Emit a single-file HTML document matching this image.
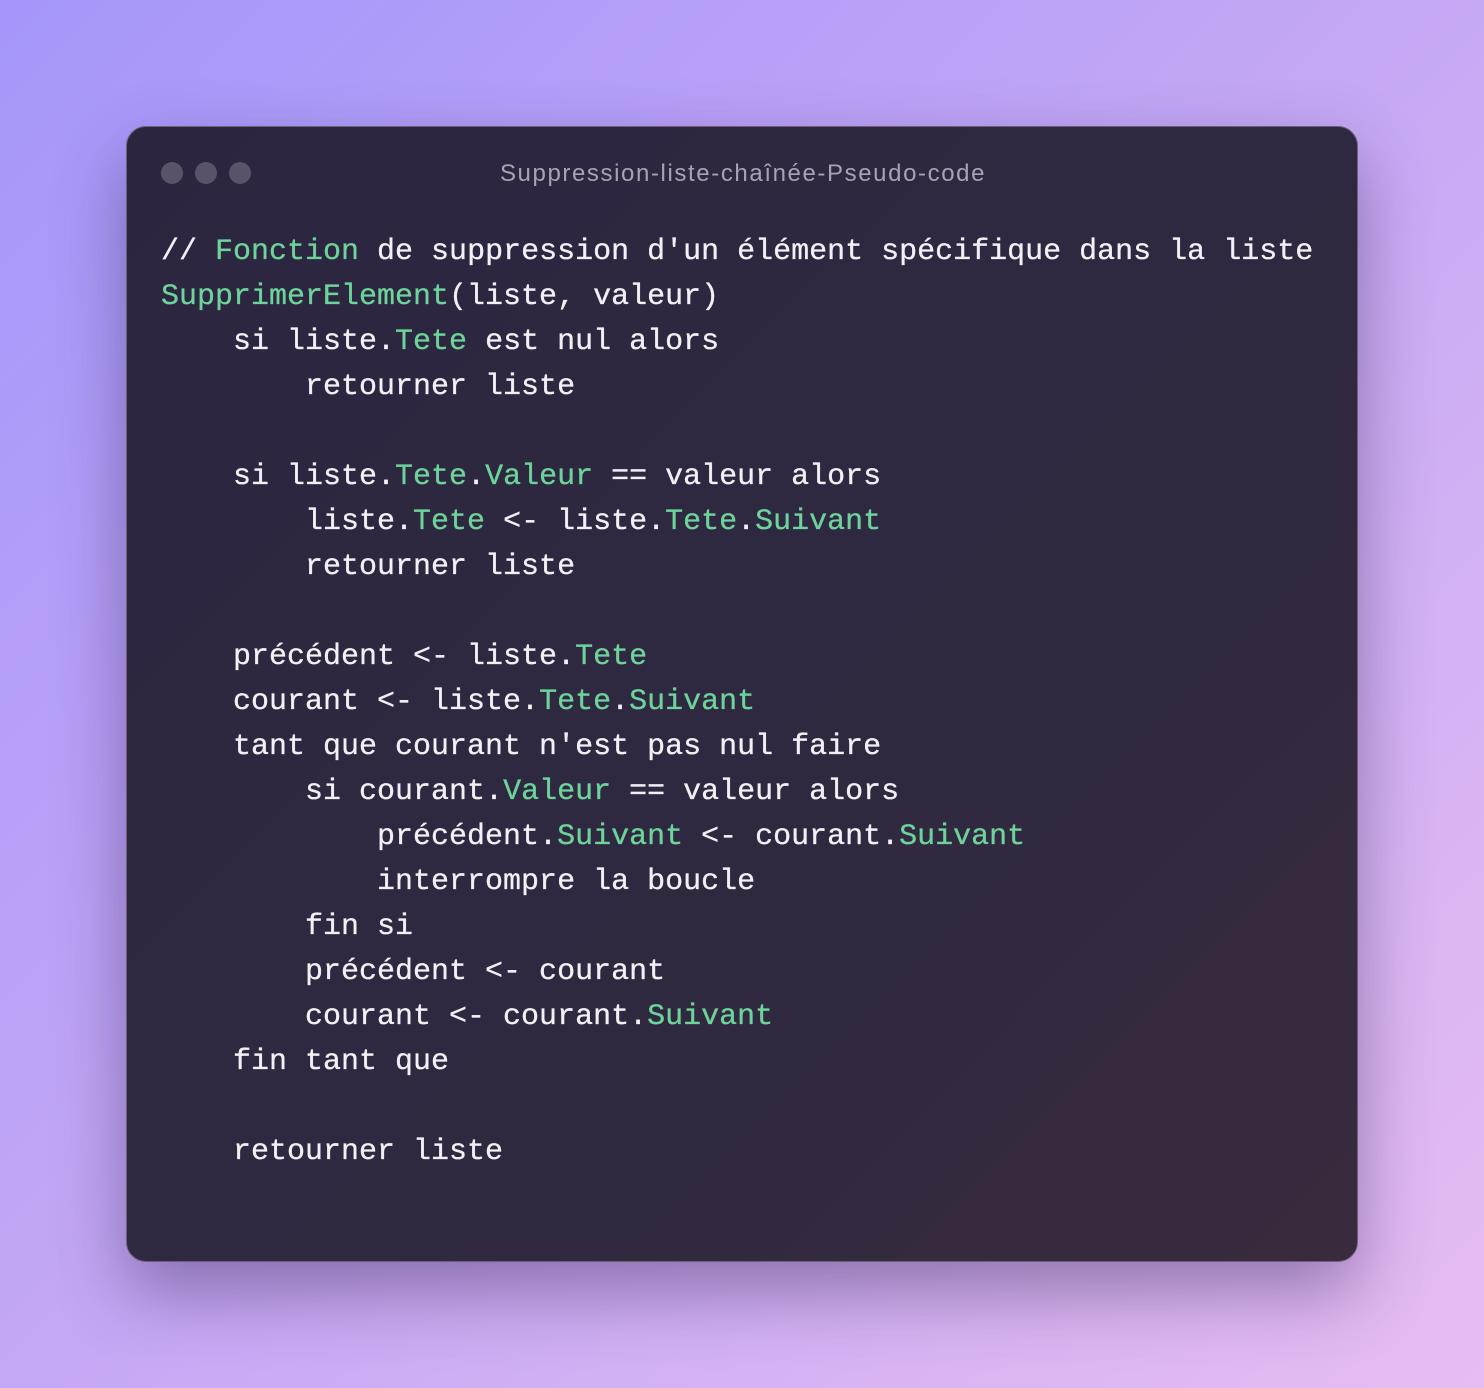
<!DOCTYPE html>
<html><head><meta charset="utf-8"><style>
html,body{margin:0;padding:0;width:1484px;height:1388px;overflow:hidden;}
body{background:linear-gradient(135deg,#a596fb 0%,#c5a8f5 50%,#e6bdf2 100%);position:relative;font-family:"Liberation Sans",sans-serif;}
.win{position:absolute;left:126px;top:126px;width:1230px;height:1134px;border-radius:20px;background:linear-gradient(135deg,#2b2540 0%,#2f2940 60%,#3a2a3d 100%);border:1px solid #6a6078;box-shadow:0 30px 70px rgba(60,40,90,0.45);}
.dot{position:absolute;top:35px;width:22px;height:22px;border-radius:50%;background:#5a5268;}
.title{position:absolute;top:33px;left:0;width:1232px;text-align:center;color:#a8a2b2;font-size:24px;letter-spacing:1.6px;}
pre{position:absolute;left:34px;top:103px;margin:0;font-family:"Liberation Mono",monospace;font-size:30px;line-height:45px;color:#f2f0f5;-webkit-text-stroke:0.3px #f2f0f5;}
.g{color:#6ed39a;-webkit-text-stroke:0.3px #6ed39a;}
</style></head><body>
<div class="win">
<div class="dot" style="left:34px"></div><div class="dot" style="left:68px"></div><div class="dot" style="left:102px"></div>
<div class="title">Suppression-liste-chaînée-Pseudo-code</div>
<pre>// <span class="g">Fonction</span> de suppression d'un élément spécifique dans la liste
<span class="g">SupprimerElement</span>(liste, valeur)
    si liste.<span class="g">Tete</span> est nul alors
        retourner liste

    si liste.<span class="g">Tete</span>.<span class="g">Valeur</span> == valeur alors
        liste.<span class="g">Tete</span> &lt;- liste.<span class="g">Tete</span>.<span class="g">Suivant</span>
        retourner liste

    précédent &lt;- liste.<span class="g">Tete</span>
    courant &lt;- liste.<span class="g">Tete</span>.<span class="g">Suivant</span>
    tant que courant n'est pas nul faire
        si courant.<span class="g">Valeur</span> == valeur alors
            précédent.<span class="g">Suivant</span> &lt;- courant.<span class="g">Suivant</span>
            interrompre la boucle
        fin si
        précédent &lt;- courant
        courant &lt;- courant.<span class="g">Suivant</span>
    fin tant que

    retourner liste</pre>
</div>
</body></html>
